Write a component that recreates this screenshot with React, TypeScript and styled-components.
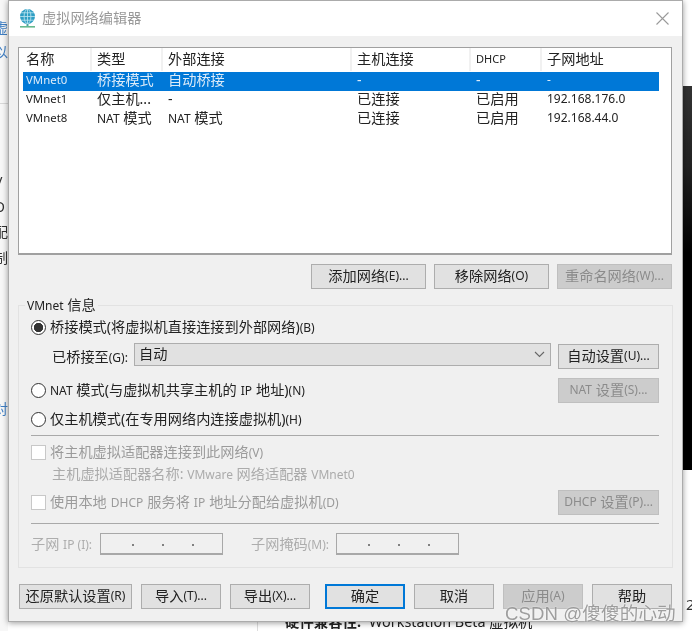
import React from 'react';
import styled, { createGlobalStyle } from 'styled-components';

const Global = createGlobalStyle`
  html, body { margin: 0; padding: 0; background: #fff; }
  #root { width: 692px; height: 631px; overflow: hidden; }
`;

const FONT = `"Noto Sans", "Noto Sans CJK SC", sans-serif`;

const Desktop = styled.div`
  position: relative;
  width: 692px;
  height: 631px;
  overflow: hidden;
  background: #fff;
  font-family: ${FONT};
  font-size: 14.2px;
  color: #222;
  filter: blur(0.35px);
`;
const LeftGutter = styled.div`
  position: absolute;
  left: 0; top: 0;
  width: 8px;
  height: 631px;
  background: #f7f7f7;
`;
const GutterLine = styled.div`
  position: absolute;
  left: 0; top: 103px;
  width: 8px;
  height: 1px;
  background: #d8d8d8;
`;
const GutterGlyph = styled.span<{ $top: number; $blue?: boolean }>`
  position: absolute;
  left: -6px;
  top: ${p => p.$top}px;
  line-height: 16px;
  font-size: 14px;
  color: ${p => (p.$blue ? '#3f7fc4' : '#333')};
`;
const BlackPanel = styled.div`
  position: absolute;
  left: 683px; top: 86px;
  width: 9px;
  height: 384px;
  background: linear-gradient(#333 0, #222 80px, #000 170px);
`;
const PageFoot = styled.div`
  position: absolute;
  left: 285px; top: 611px;
  white-space: nowrap;
  font-size: 14.4px;
  line-height: 22px;
  color: #222;
`;
const FootBold = styled.b`
  margin-right: 8px;
`;
const FootRule = styled.div`
  position: absolute;
  left: 257px; top: 622px;
  width: 1px;
  height: 9px;
  background: #ddd;
`;
const PageNumber = styled.span`
  position: absolute;
  left: 686px; top: 594px;
  font-size: 15px;
  line-height: 20px;
  color: #333;
`;
const Dialog = styled.div`
  position: absolute;
  left: 8px; top: 0;
  width: 675px;
  height: 622px;
  box-sizing: border-box;
  display: flex;
  flex-direction: column;
  background: #f0f0f0;
  border: 1px solid #ababab;
  box-shadow: 0 1px 6px rgba(0, 0, 0, 0.4);
`;
const TitleBar = styled.div`
  height: 35px;
  flex: none;
  display: flex;
  align-items: center;
  background: #fff;
  padding: 0 13px 0 10px;
`;
const TitleText = styled.div`
  margin: 0 0 3px 6px;
  font-size: 14.2px;
  color: #999;
  flex: 1;
`;
const Body = styled.div`
  flex: 1;
  display: flex;
  flex-direction: column;
  padding: 11px 10px 0 9px;
`;
const ListBox = styled.div`
  height: 208px;
  box-sizing: border-box;
  border: 1px solid #a0a0a0;
  border-bottom-width: 2px;
  background: #fff;
`;
const HeaderRow = styled.div`
  display: grid;
  grid-template-columns: 71px 71px 189px 119px 71px 118px;
  width: 639px;
  height: 24px;
`;
const HeaderCell = styled.div<{ $small?: boolean; $first?: boolean }>`
  padding-left: ${p => (p.$first ? 7 : 5)}px;
  line-height: 20px;
  padding-top: 1px;
  font-size: ${p => (p.$small ? 11 : 14.2)}px;
  border-left: ${p => (p.$first ? 'none' : '2px solid #f1f1f1')};
  height: 23px;
  box-sizing: border-box;
  color: #222;
`;
const DataRow = styled.div<{ $selected?: boolean }>`
  display: grid;
  grid-template-columns: 67px 71px 189px 119px 71px 118px;
  width: 636px;
  height: 19px;
  margin-left: 4px;
  background: ${p => (p.$selected ? '#0078d7' : 'transparent')};
  color: ${p => (p.$selected ? '#dcebf8' : '#222')};
`;
const DataCell = styled.div<{ $first?: boolean; $latin?: boolean }>`
  padding-left: ${p => (p.$first ? 3 : 7)}px;
  line-height: 16px;
  white-space: nowrap;
  font-size: ${p => (p.$first ? 11.4 : p.$latin ? 12 : 14.2)}px;
`;
const L = styled.span`
  font-size: 12px;
`;
const LatinGap = styled.span`
  font-size: 12px;
  margin: 0 4px;
`;
const ActionRow = styled.div`
  display: flex;
  justify-content: flex-end;
  gap: 8px;
  margin-top: 9px;
`;
const Btn = styled.div<{ $w: number; $off?: boolean; $primary?: boolean; $lifted?: boolean }>`
  width: ${p => p.$w}px;
  height: 25px;
  flex: none;
  box-sizing: border-box;
  display: flex;
  align-items: center;
  justify-content: center;
  white-space: nowrap;
  padding-bottom: 3px;
  margin-top: ${p => (p.$lifted ? 1 : 0)}px;
  background: ${p => (p.$off ? '#cccccc' : '#e1e1e1')};
  border: ${p =>
    p.$primary ? '2px solid #0078d7' : p.$off ? '1px solid #bfbfbf' : '1px solid #adadad'};
  color: ${p => (p.$off ? '#8b8b8b' : '#222')};
  font-size: 14.2px;
`;
const Group = styled.div`
  position: relative;
  margin-top: 16px;
  height: 263px;
  width: 655px;
  box-sizing: border-box;
  border: 1px solid #e2e2e2;
  padding: 11px 13px 0 12px;
  display: flex;
  flex-direction: column;
`;
const Legend = styled.div`
  position: absolute;
  left: 6px; top: -10px;
  padding: 0 2px;
  background: #f0f0f0;
  line-height: 18px;
`;
const Row = styled.div<{ $h: number; $mt?: number; $start?: boolean }>`
  display: flex;
  align-items: ${p => (p.$start ? 'flex-start' : 'center')};
  height: ${p => p.$h}px;
  margin-top: ${p => p.$mt ?? 0}px;
  flex: none;
  white-space: nowrap;
`;
const Label = styled.span<{ $off?: boolean }>`
  margin-bottom: 3px;
  color: ${p => (p.$off ? '#9b9b9b' : 'inherit')};
`;
const Radio = styled.span<{ $on?: boolean }>`
  width: 15px;
  height: 15px;
  flex: none;
  box-sizing: border-box;
  border: 1.4px solid #333;
  border-radius: 50%;
  margin-right: 4px;
  background: ${p => (p.$on ? 'radial-gradient(circle, #333 0 4.4px, #fff 4.9px)' : '#fff')};
`;
const Check = styled.span`
  width: 15px;
  height: 15px;
  flex: none;
  box-sizing: border-box;
  border: 1px solid #c8c8c8;
  margin-right: 4px;
  background: #fff;
`;
const BridgeLabel = styled.span`
  margin: 3px 0 0 21px;
  width: 82px;
  flex: none;
`;
const Select = styled.div`
  width: 417px;
  height: 23px;
  flex: none;
  box-sizing: border-box;
  display: flex;
  align-items: center;
  justify-content: space-between;
  padding: 0 5px 0 4px;
  background: #e1e1e1;
  border: 1px solid #adadad;
  margin-right: 7px;
`;
const Spacer = styled.span`
  flex: 1;
`;
const Rule = styled.div<{ $mt: number }>`
  height: 1px;
  flex: none;
  margin-top: ${p => p.$mt}px;
  background: #a9a9a9;
`;
const Hint = styled.span`
  margin: 0 0 3px 21px;
  color: #ababab;
`;
const SubnetLabel = styled.span<{ $w: number; $ml?: number }>`
  width: ${p => p.$w}px;
  margin: 0 0 3px ${p => p.$ml ?? 0}px;
  flex: none;
  color: #adadad;
`;
const IpField = styled.div`
  width: 123px;
  height: 22px;
  flex: none;
  box-sizing: border-box;
  display: flex;
  justify-content: space-evenly;
  align-items: center;
  padding-left: 3px;
  border: 1px solid #a8a8a8;
  border-bottom-width: 2px;
  background: #f0f0f0;
`;
const IpDot = styled.span`
  width: 2px;
  height: 2px;
  background: #808080;
  margin-top: 3px;
`;
const FooterRow = styled.div`
  display: flex;
  margin-top: 16px;
`;
const FooterBtn = styled(Btn)<{ $ml: number }>`
  margin-left: ${p => p.$ml}px;
`;
const Watermark = styled.div`
  position: absolute;
  left: 505px; top: 601px;
  white-space: nowrap;
  font-family: "Liberation Sans", "Noto Sans CJK SC", sans-serif;
  font-size: 18.6px;
  line-height: 26px;
  letter-spacing: 0.1px;
  color: rgba(135, 135, 135, 0.8);
  text-shadow: 0 0 2px rgba(255, 255, 255, 0.9);
`;

const GlobeIcon = () => (
  <svg width="17" height="19" viewBox="0 0 17 19" fill="none">
    <circle cx="8.5" cy="7.5" r="7.5" fill="#2f9ec4" />
    <ellipse cx="8.5" cy="7.5" rx="3.4" ry="7.2" stroke="#bfe6f0" strokeWidth="0.8" />
    <path d="M1 7.5h15M2.2 3.8h12.6M2.2 11.2h12.6M8.5 0v15" stroke="#bfe6f0" strokeWidth="0.8" />
    <rect x="7.5" y="15" width="2" height="2" fill="#4aa6a0" />
    <rect x="1" y="17" width="15" height="1.6" fill="#67b98d" />
  </svg>
);
const CloseIcon = () => (
  <svg width="13" height="13" viewBox="0 0 13 13" fill="none">
    <path d="M0.5 0.5l12 12M12.5 0.5l-12 12" stroke="#9a9a9a" strokeWidth="1.1" />
  </svg>
);
const ChevronIcon = () => (
  <svg width="11" height="7" viewBox="0 0 11 7" fill="none">
    <path d="M1 1l4.5 4.5L10 1" stroke="#666" strokeWidth="1.1" />
  </svg>
);

const networks = [
  { name: 'VMnet0', type: '桥接模式', ext: '自动桥接', host: '-', dhcp: '-', subnet: '-', selected: true },
  { name: 'VMnet1', type: '仅主机...', ext: '-', host: '已连接', dhcp: '已启用', subnet: '192.168.176.0' },
  { name: 'VMnet8', type: <><L>NAT</L> 模式</>, ext: <><L>NAT</L> 模式</>, host: '已连接', dhcp: '已启用', subnet: '192.168.44.0' },
];

const IpBox = () => (
  <IpField>
    <IpDot />
    <IpDot />
    <IpDot />
  </IpField>
);

export default function App() {
  return (
    <Desktop>
      <Global />
      <LeftGutter />
      <GutterLine />
      <GutterGlyph $top={20} $blue>虚</GutterGlyph>
      <GutterGlyph $top={44} $blue>以</GutterGlyph>
      <GutterGlyph $top={174}>V</GutterGlyph>
      <GutterGlyph $top={199}>O</GutterGlyph>
      <GutterGlyph $top={224}>配</GutterGlyph>
      <GutterGlyph $top={250}>制</GutterGlyph>
      <GutterGlyph $top={401} $blue>对</GutterGlyph>
      <BlackPanel />
      <FootRule />
      <PageFoot>
        <FootBold>硬件兼容性:</FootBold>Workstation Beta 虚拟机
      </PageFoot>
      <PageNumber>2</PageNumber>

      <Dialog>
        <TitleBar>
          <GlobeIcon />
          <TitleText>虚拟网络编辑器</TitleText>
          <CloseIcon />
        </TitleBar>
        <Body>
          <ListBox>
            <HeaderRow>
              <HeaderCell $first>名称</HeaderCell>
              <HeaderCell>类型</HeaderCell>
              <HeaderCell>外部连接</HeaderCell>
              <HeaderCell>主机连接</HeaderCell>
              <HeaderCell $small>DHCP</HeaderCell>
              <HeaderCell>子网地址</HeaderCell>
            </HeaderRow>
            {networks.map(n => (
              <DataRow key={n.name} $selected={n.selected}>
                <DataCell $first $latin>{n.name}</DataCell>
                <DataCell>{n.type}</DataCell>
                <DataCell>{n.ext}</DataCell>
                <DataCell>{n.host}</DataCell>
                <DataCell>{n.dhcp}</DataCell>
                <DataCell $latin>{n.subnet}</DataCell>
              </DataRow>
            ))}
          </ListBox>

          <ActionRow>
            <Btn $w={115}>添加网络<L>(E)...</L></Btn>
            <Btn $w={115}>移除网络<L>(O)</L></Btn>
            <Btn $w={115} $off>重命名网络<L>(W)...</L></Btn>
          </ActionRow>

          <Group>
            <Legend><L>VMnet</L> 信息</Legend>
            <Row $h={20}>
              <Radio $on />
              <Label>桥接模式(将虚拟机直接连接到外部网络)<L>(B)</L></Label>
            </Row>
            <Row $h={26} $mt={6} $start>
              <BridgeLabel>已桥接至<L>(G):</L></BridgeLabel>
              <Select>
                <Label>自动</Label>
                <ChevronIcon />
              </Select>
              <Btn $w={101} $lifted>自动设置<L>(U)...</L></Btn>
            </Row>
            <Row $h={25} $mt={9}>
              <Radio />
              <Label><L>NAT</L>&nbsp;模式(与虚拟机共享主机的<LatinGap>IP</LatinGap>地址)<L>(N)</L></Label>
              <Spacer />
              <Btn $w={101} $off><L>NAT</L>&nbsp;设置<L>(S)...</L></Btn>
            </Row>
            <Row $h={20} $mt={6}>
              <Radio />
              <Label>仅主机模式(在专用网络内连接虚拟机)<L>(H)</L></Label>
            </Row>
            <Rule $mt={6} />
            <Row $h={16} $mt={8}>
              <Check />
              <Label $off>将主机虚拟适配器连接到此网络<L>(V)</L></Label>
            </Row>
            <Row $h={18} $mt={5}>
              <Hint>主机虚拟适配器名称: <L>VMware</L> 网络适配器 <L>VMnet0</L></Hint>
            </Row>
            <Row $h={25} $mt={7}>
              <Check />
              <Label $off>使用本地<LatinGap>DHCP</LatinGap>服务将<LatinGap>IP</LatinGap>地址分配给虚拟机<L>(D)</L></Label>
              <Spacer />
              <Btn $w={101} $off><L>DHCP</L>&nbsp;设置<L>(P)...</L></Btn>
            </Row>
            <Rule $mt={8} />
            <Row $h={22} $mt={9}>
              <SubnetLabel $w={69}>子网 <L>IP (I):</L></SubnetLabel>
              <IpBox />
              <SubnetLabel $w={85} $ml={28}>子网掩码<L>(M):</L></SubnetLabel>
              <IpBox />
            </Row>
          </Group>

          <FooterRow>
            <FooterBtn $ml={1} $w={113}>还原默认设置<L>(R)</L></FooterBtn>
            <FooterBtn $ml={9} $w={80}>导入<L>(T)...</L></FooterBtn>
            <FooterBtn $ml={9} $w={80}>导出<L>(X)...</L></FooterBtn>
            <FooterBtn $ml={15} $w={80} $primary>确定</FooterBtn>
            <FooterBtn $ml={9} $w={80}>取消</FooterBtn>
            <FooterBtn $ml={9} $w={80} $off>应用<L>(A)</L></FooterBtn>
            <FooterBtn $ml={9} $w={80}>帮助</FooterBtn>
          </FooterRow>
        </Body>
      </Dialog>
      <Watermark>CSDN @傻傻的心动</Watermark>
    </Desktop>
  );
}
